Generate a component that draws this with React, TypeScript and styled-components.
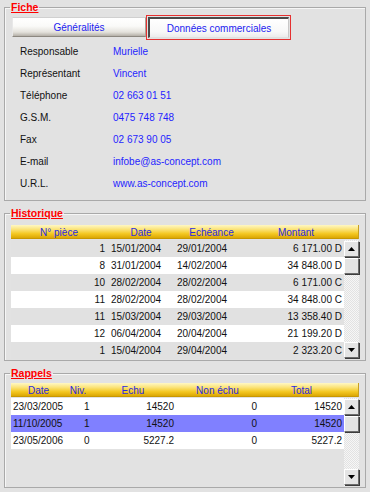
import React from 'react';
import styled, { createGlobalStyle } from 'styled-components';

const GlobalStyle = createGlobalStyle`
  html, body {
    margin: 0;
    padding: 0;
    background: #e2e2e2;
  }
  body {
    font-family: "Liberation Sans", Arial, sans-serif;
    font-size: 10px;
    color: #000;
  }
`;

const Page = styled.div`
  width: 370px;
  height: 492px;
  box-sizing: border-box;
  padding: 1px 4px 0 4px;
  display: flex;
  flex-direction: column;
  gap: 6px;
  background: #e2e2e2;
`;

const Group = styled.fieldset<{ $h: number }>`
  margin: 0;
  padding: 0 6px;
  min-width: 0;
  height: ${({ $h }) => $h}px;
  box-sizing: border-box;
  border: 1px solid #a9a9a9;
  box-shadow: inset 1px 1px 0 #f6f6f6;
`;

const Legend = styled.legend`
  margin-left: -1px;
  padding: 0 1px;
  color: #ff0000;
  font-weight: bold;
  font-size: 10.5px;
  line-height: 12px;
  text-decoration: underline;
`;

/* ---- Fiche ---- */

const TabRow = styled.div`
  display: flex;
  align-items: flex-start;
  padding: 4px 0 0 1px;
  height: 27px;
  box-sizing: border-box;
`;

const Tab = styled.div<{ $active?: boolean }>`
  box-sizing: border-box;
  display: flex;
  align-items: center;
  justify-content: center;
  color: #1c1cf0;
  width: ${({ $active }) => ($active ? 141 : 134)}px;
  height: ${({ $active }) => ($active ? 21 : 20)}px;
  margin-left: ${({ $active }) => ($active ? 2 : 0)}px;
  background: ${({ $active }) =>
    $active
      ? 'linear-gradient(#ffffff, #f8f8f8 70%, #ececec)'
      : 'linear-gradient(#ffffff, #fafaf8 45%, #e4e2dc 78%, #b4b0a8)'};
  border-top: ${({ $active }) => ($active ? '2px solid #4a4a4a' : '1px solid #d0d0d0')};
  border-left: ${({ $active }) => ($active ? '2px solid #4a4a4a' : '1px solid #e8e8e8')};
  border-right: 1px solid ${({ $active }) => ($active ? '#c8c8c8' : '#a8a49c')};
  border-bottom: 1px solid ${({ $active }) => ($active ? '#e0e0e0' : '#8c8880')};
  outline: ${({ $active }) => ($active ? '1px solid #e53030' : 'none')};
  outline-offset: 1px;
`;

const InfoGrid = styled.div`
  display: grid;
  grid-template-columns: 93px 1fr;
  grid-auto-rows: 22px;
  align-items: center;
  padding-left: 9px;
`;

const Label = styled.div`
  color: #111;
`;

const Value = styled.div`
  color: #1f1fff;
`;

/* ---- Tables ---- */

const HeaderBar = styled.div<{ $cols: string; $mt: number }>`
  display: grid;
  grid-template-columns: ${({ $cols }) => $cols} 15px;
  height: 14px;
  margin-top: ${({ $mt }) => $mt}px;
  box-sizing: border-box;
  align-items: center;
  background: linear-gradient(#fff7c4 0%, #fbe47c 30%, #f4c822 62%, #dca804 92%, #b88a00 100%);
  border-right: 1px solid #c8a020;
  color: #2a2ae0;
`;

const HeadCell = styled.div`
  text-align: center;
  white-space: nowrap;
`;

const Body = styled.div<{ $h: number }>`
  display: flex;
  margin-top: 1px;
  height: ${({ $h }) => $h}px;
`;

const Rows = styled.div`
  width: 333px;
  display: flex;
  flex-direction: column;
`;

const Row = styled.div<{ $cols: string; $bg: string }>`
  display: grid;
  grid-template-columns: ${({ $cols }) => $cols};
  height: 17px;
  line-height: 17px;
  background: ${({ $bg }) => $bg};
  color: #111;
`;

const Cell = styled.div<{ $align?: 'left' | 'right'; $pad?: number }>`
  text-align: ${({ $align }) => $align || 'left'};
  padding: 0 ${({ $align, $pad }) => ($align === 'right' ? $pad ?? 2 : 0)}px 0
    ${({ $align, $pad }) => ($align === 'right' ? 0 : $pad ?? 2)}px;
  white-space: nowrap;
  overflow: hidden;
`;

const Scrollbar = styled.div`
  width: 15px;
  display: flex;
  flex-direction: column;
  padding: 1px 0;
  box-sizing: border-box;
  background: repeating-conic-gradient(#f6f6f6 0 25%, #e2e2e2 0 50%) 0 0 / 2px 2px;
`;

const ScrollButton = styled.div`
  width: 15px;
  height: 16px;
  box-sizing: border-box;
  display: flex;
  align-items: center;
  justify-content: center;
  background: #e4e4e4;
  border-top: 1px solid #ffffff;
  border-left: 1px solid #ffffff;
  border-right: 1px solid #6c6c6c;
  border-bottom: 1px solid #6c6c6c;
  box-shadow: 1px 1px 0 #3c3c3c;
`;

const Thumb = styled(ScrollButton)`
  margin-top: 1px;
`;

const Spacer = styled.div`
  flex: 1;
`;

const Arrow = ({ down }: { down?: boolean }) => (
  <svg width="7" height="4" viewBox="0 0 7 4">
    <polygon points={down ? '0,0 7,0 3.5,4' : '0,4 7,4 3.5,0'} fill="#000" />
  </svg>
);

const Scroll = () => (
  <Scrollbar>
    <ScrollButton>
      <Arrow />
    </ScrollButton>
    <Thumb />
    <Spacer />
    <ScrollButton>
      <Arrow down />
    </ScrollButton>
  </Scrollbar>
);

const fiche = [
  ['Responsable', 'Murielle'],
  ['Représentant', 'Vincent'],
  ['Téléphone', '02 663 01 51'],
  ['G.S.M.', '0475 748 748'],
  ['Fax', '02 673 90 05'],
  ['E-mail', 'infobe@as-concept.com'],
  ['U.R.L.', 'www.as-concept.com'],
];

const histCols = '96px 68px 73px 96px';
const historique = [
  ['1', '15/01/2004', '29/01/2004', '6 171.00 D'],
  ['8', '31/01/2004', '14/02/2004', '34 848.00 D'],
  ['10', '28/02/2004', '28/02/2004', '6 171.00 C'],
  ['11', '28/02/2004', '28/02/2004', '34 848.00 C'],
  ['11', '15/03/2004', '29/03/2004', '13 358.40 D'],
  ['12', '06/04/2004', '20/04/2004', '21 199.20 D'],
  ['1', '15/04/2004', '29/04/2004', '2 323.20 C'],
];

const rapCols = '55px 24px 86px 83px 85px';
const rappels = [
  ['23/03/2005', '1', '14520', '0', '14520'],
  ['11/10/2005', '1', '14520', '0', '14520'],
  ['23/05/2006', '0', '5227.2', '0', '5227.2'],
];

export default function App() {
  return (
    <>
      <GlobalStyle />
      <Page>
        <Group $h={200}>
          <Legend>Fiche</Legend>
          <TabRow>
            <Tab>Généralités</Tab>
            <Tab $active>Données commerciales</Tab>
          </TabRow>
          <InfoGrid>
            {fiche.map(([l, v]) => (
              <React.Fragment key={l}>
                <Label>{l}</Label>
                <Value>{v}</Value>
              </React.Fragment>
            ))}
          </InfoGrid>
        </Group>

        <Group $h={154}>
          <Legend>Historique</Legend>
          <HeaderBar $cols={histCols} $mt={6}>
            <HeadCell>N° pièce</HeadCell>
            <HeadCell>Date</HeadCell>
            <HeadCell>Echéance</HeadCell>
            <HeadCell>Montant</HeadCell>
          </HeaderBar>
          <Body $h={119}>
            <Rows>
              {historique.map((r, i) => (
                <Row key={i} $cols={histCols} $bg={i % 2 === 0 ? '#e1e1e1' : '#ffffff'}>
                  <Cell $align="right">{r[0]}</Cell>
                  <Cell $pad={4}>{r[1]}</Cell>
                  <Cell>{r[2]}</Cell>
                  <Cell $align="right">{r[3]}</Cell>
                </Row>
              ))}
            </Rows>
            <Scroll />
          </Body>
        </Group>

        <Group $h={121}>
          <Legend>Rappels</Legend>
          <HeaderBar $cols={rapCols} $mt={4}>
            <HeadCell>Date</HeadCell>
            <HeadCell>Niv.</HeadCell>
            <HeadCell>Echu</HeadCell>
            <HeadCell>Non échu</HeadCell>
            <HeadCell>Total</HeadCell>
          </HeaderBar>
          <Body $h={88}>
            <Rows>
              {rappels.map((r, i) => (
                <Row key={i} $cols={rapCols} $bg={i === 1 ? '#8080ff' : '#ffffff'}>
                  <Cell>{r[0]}</Cell>
                  <Cell $pad={18}>{r[1]}</Cell>
                  <Cell $align="right">{r[2]}</Cell>
                  <Cell $align="right">{r[3]}</Cell>
                  <Cell $align="right">{r[4]}</Cell>
                </Row>
              ))}
            </Rows>
            <Scroll />
          </Body>
        </Group>
      </Page>
    </>
  );
}
